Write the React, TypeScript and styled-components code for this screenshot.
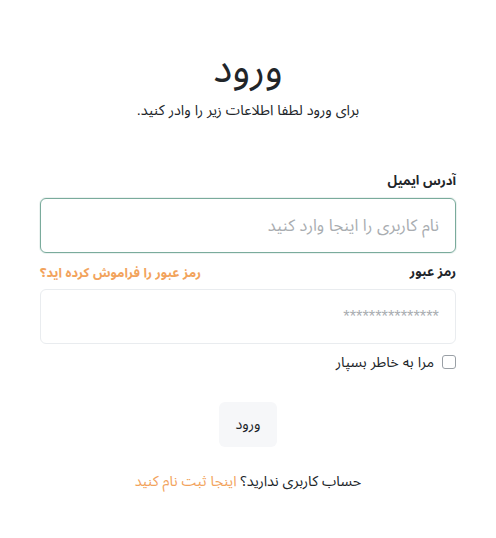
import React from "react";
import styled, { createGlobalStyle } from "styled-components";

const Global = createGlobalStyle`
  html, body { margin: 0; padding: 0; background: #fff; }
  body { font-family: "Liberation Sans", "Noto Sans Arabic", "DejaVu Sans", sans-serif; color: #212529; }
  * { box-sizing: border-box; }
`;

const Page = styled.div`
  direction: rtl;
  width: 496px;
  min-height: 538px;
  padding: 40px 40px 0;
  display: flex;
  flex-direction: column;
`;

const Header = styled.div`
  display: flex;
  flex-direction: column;
  align-items: center;
`;

const Title = styled.h1`
  margin: 0;
  font-size: 40px;
  font-weight: 400;
  line-height: 56px;
  color: #212529;
`;

const Subtitle = styled.p`
  margin: 3px 0 0;
  font-size: 14.4px;
  line-height: 22px;
  color: #212529;
`;

const Form = styled.form`
  margin-top: 49px;
  display: flex;
  flex-direction: column;
`;

const LabelRow = styled.div`
  display: flex;
  justify-content: space-between;
  align-items: center;
  height: 22px;
  margin-bottom: 6px;
`;

const Label = styled.label`
  font-size: 13px;
  font-weight: 700;
  color: #212529;
`;

const Link = styled.a`
  font-size: 12.8px;
  font-weight: 700;
  color: #f2a35c;
  text-decoration: none;
`;

const Input = styled.input<{ $focused?: boolean }>`
  width: 100%;
  height: 55px;
  border-radius: 6px;
  border: 1px solid ${(p) => (p.$focused ? "#7aab9c" : "#e9ecef")};
  box-shadow: ${(p) => (p.$focused ? "0 0 0 1px rgba(122,171,156,0.15)" : "none")};
  padding: 0 16px;
  font-family: inherit;
  font-size: 16.4px;
  color: #212529;
  direction: rtl;
  outline: none;
  background: #fff;
  &::placeholder { color: #a9adb1; }
`;

const Spacer = styled.div<{ $h: number }>`
  height: ${(p) => p.$h}px;
`;

const CheckRow = styled.label`
  display: flex;
  align-items: center;
  gap: 8px;
  font-size: 14.4px;
  color: #212529;
  height: 22px;
`;

const Box = styled.span`
  width: 14px;
  height: 14px;
  border: 1px solid #9aa0a6;
  border-radius: 3px;
  background: #fff;
`;

const ButtonWrap = styled.div`
  display: flex;
  justify-content: center;
  margin-top: 29px;
`;

const Button = styled.button`
  width: 58px;
  height: 45px;
  border: none;
  border-radius: 6px;
  background: #f6f7f9;
  font-family: inherit;
  font-size: 14.4px;
  color: #212529;
`;

const Footer = styled.p`
  margin: 23px 0 0;
  text-align: center;
  font-size: 14.4px;
  line-height: 22px;
  color: #212529;
`;

const FooterLink = styled.a`
  color: #f2a35c;
  text-decoration: none;
`;

export default function App() {
  return (
    <>
      <Global />
      <Page>
        <Header>
          <Title>ورود</Title>
          <Subtitle>برای ورود لطفا اطلاعات زیر را وادر کنید.</Subtitle>
        </Header>
        <Form onSubmit={(e) => e.preventDefault()}>
          <LabelRow>
            <Label>آدرس ایمیل</Label>
          </LabelRow>
          <Input $focused autoFocus placeholder="نام کاربری را اینجا وارد کنید" />
          <Spacer $h={8} />
          <LabelRow>
            <Label>رمز عبور</Label>
            <Link href="#">رمز عبور را فراموش کرده اید؟</Link>
          </LabelRow>
          <Input type="password" placeholder="***************" />
          <Spacer $h={7} />
          <CheckRow>
            <Box />
            مرا به خاطر بسپار
          </CheckRow>
          <ButtonWrap>
            <Button type="submit">ورود</Button>
          </ButtonWrap>
          <Footer>
            حساب کاربری ندارید؟ <FooterLink href="#">اینجا ثبت نام کنید</FooterLink>
          </Footer>
        </Form>
      </Page>
    </>
  );
}
